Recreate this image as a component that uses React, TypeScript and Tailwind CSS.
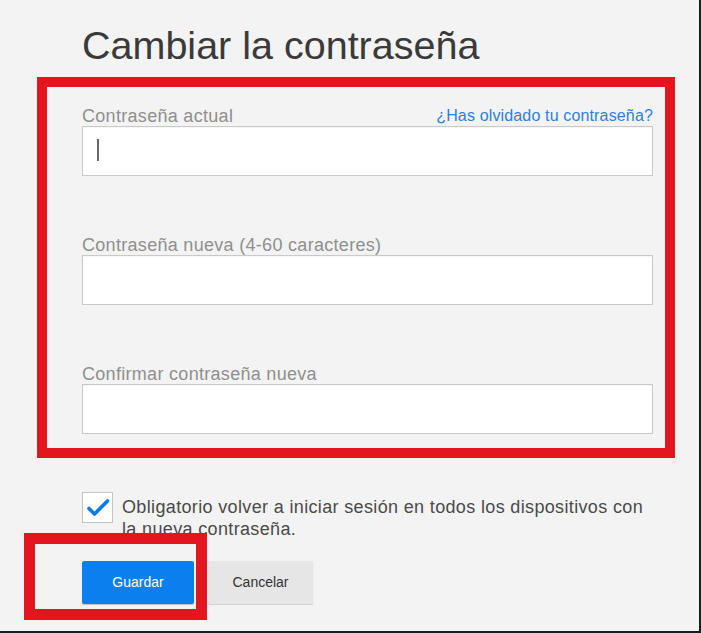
import React from "react";

function Field({ label, link, cursor }: { label: string; link?: string; cursor?: boolean }) {
  return (
    <div className="flex flex-col">
      <div className="flex h-[20px] items-center justify-between leading-[20px]">
        <span className="text-[18px] tracking-[0.3px] text-[#8f8f8f]">{label}</span>
        {link && <span className="text-[16px] tracking-[0.15px] text-[#2e7fe0]">{link}</span>}
      </div>
      <div className="relative h-[50px] border border-[#c9c9c9] bg-white shadow-[inset_0_1px_1px_rgba(0,0,0,0.04)]">
        {cursor && <div className="absolute left-[14px] top-[12px] h-[22px] w-[2px] bg-[#666]" />}
      </div>
    </div>
  );
}

export default function App() {
  return (
    <div
      className="relative h-[633px] w-[701px] overflow-hidden border-r-2 border-b-2 border-[#1c1c1c] bg-[#f3f3f3]"
      style={{ fontFamily: '"Liberation Sans", Arial, sans-serif' }}
    >
      <div className="flex w-[653px] flex-col pl-[82px]">
        <h1 className="mt-[26px] text-[39.5px] font-normal leading-[39px] text-[#3a3a3a]">Cambiar la contraseña</h1>
        <div className="mt-[41px] flex flex-col gap-[59px]">
          <Field label="Contraseña actual" link="¿Has olvidado tu contraseña?" cursor />
          <Field label="Contraseña nueva (4-60 caracteres)" />
          <Field label="Confirmar contraseña nueva" />
        </div>
        <div className="mt-[58px] flex items-start gap-[9px]">
          <div className="flex h-[31px] w-[31px] shrink-0 items-center justify-center border border-[#c4c4c4] bg-white">
            <svg width="24" height="24" viewBox="0 0 24 24" fill="none">
              <path d="M3 12.5l5.5 5.5L21.5 5" stroke="#0a7be6" strokeWidth="3.6" strokeLinecap="round" strokeLinejoin="round" />
            </svg>
          </div>
          <p className="mt-[4px] text-[18px] leading-[22px] tracking-[0.35px] text-[#4a4a4a]">
            Obligatorio volver a iniciar sesión en todos los dispositivos con la nueva contraseña.
          </p>
        </div>
        <div className="mt-[21px] flex gap-[14px]">
          <button className="h-[43px] w-[112px] rounded-[2px] bg-[#0a80ee] text-[14px] text-white shadow-[0_1px_1px_rgba(0,0,0,0.2)]">
            Guardar
          </button>
          <button className="h-[43px] w-[105px] rounded-[2px] bg-[#e6e6e6] text-[14px] text-[#333] shadow-[0_1px_1px_rgba(0,0,0,0.15)]">
            Cancelar
          </button>
        </div>
      </div>
      <div className="pointer-events-none absolute left-[37px] top-[77px] h-[381px] w-[638px] border-[10px] border-[#e3161f]" />
      <div className="pointer-events-none absolute left-[24px] top-[533px] h-[87px] w-[183px] border-[11px] border-[#e3161f]" />
    </div>
  );
}
